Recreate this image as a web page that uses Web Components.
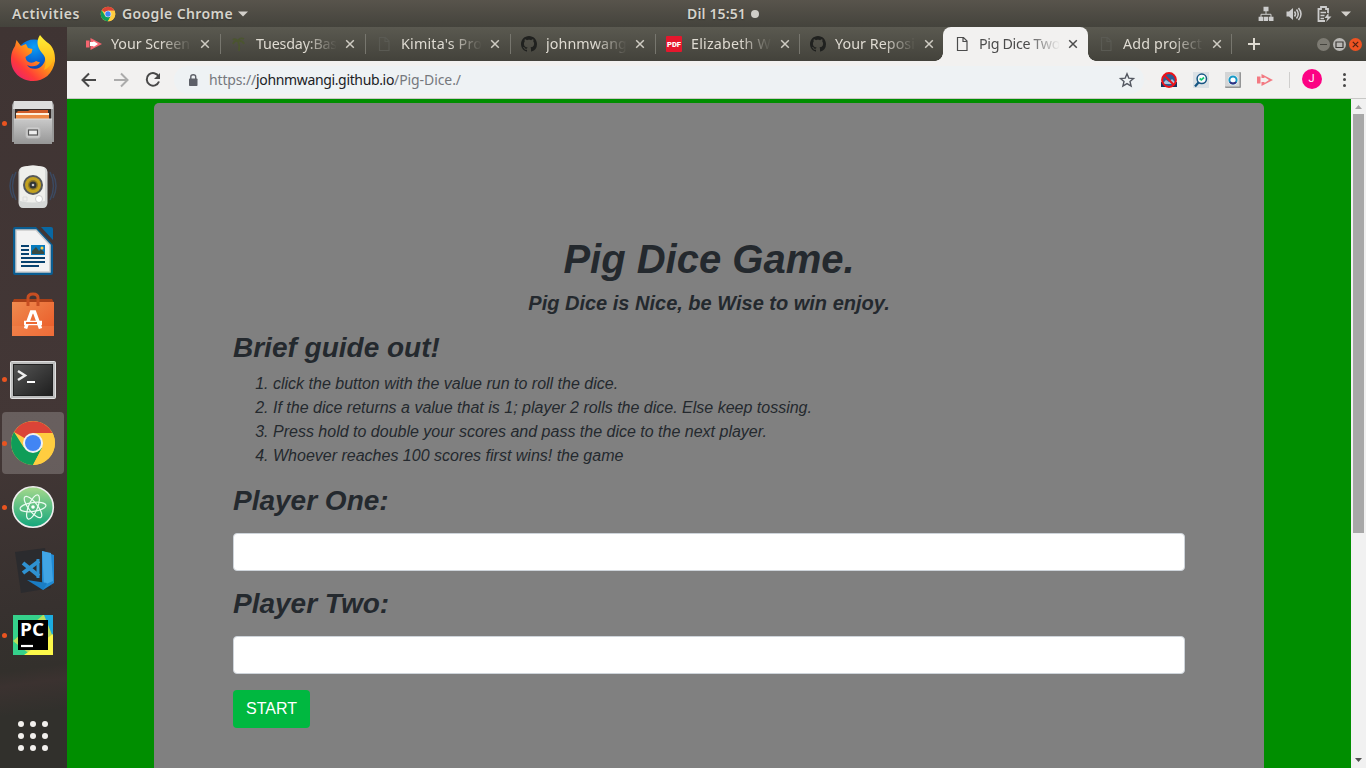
<!DOCTYPE html>
<html lang="en">
<head>
<meta charset="utf-8">
<title>Pig Dice</title>
<style>
html,body{margin:0;height:100%;overflow:hidden}
body{font-family:"Noto Sans","Open Sans",sans-serif}
</style>
</head>
<body>
<desk-top></desk-top>
<script>
const define = (name, html, setup) => customElements.define(name, class extends HTMLElement {
  connectedCallback() {
    if (this.shadowRoot) return;
    const root = this.attachShadow({mode: 'open'});
    const t = document.createElement('template');
    t.innerHTML = typeof html === 'function' ? html(this) : html;
    root.append(t.content.cloneNode(true));
    if (setup) setup(this, root);
  }
});

/* Text run tracked to a given width. */
define('fit-text', '<style>:host{display:inline-block;white-space:pre}span{display:inline-block}</style><span><slot></slot></span>', (el, root) => {
  const s = root.querySelector('span'), w = +el.getAttribute('w');
  el.style.width = w + 'px';
  const n = el.textContent.length;
  s.style.letterSpacing = (w - s.getBoundingClientRect().width) / n + 'px';
});

const icons = {
  chrome: `<svg viewBox="0 0 48 48"><circle cx="24" cy="24" r="22" fill="#fc4"/><path d="M24 24L5 13A22 22 0 0 1 43.500 14H24z" fill="#db4437"/><path d="M5 13A22 22 0 0 0 24 46L33 29 24 24 14.500 28z" fill="#0f9d58"/><path d="M24 14H43.500A22 22 0 0 1 24 46L33 29z" fill="#ffcd40"/><circle cx="24" cy="24" r="10" fill="#f1f1f1"/><circle cx="24" cy="24" r="8" fill="#4285f4"/></svg>`,
  firefox: `<svg viewBox="0 0 48 48"><defs><linearGradient id="a" x1="1" y1="0" x2="0" y2="1"><stop offset="0" stop-color="#ffe226"/><stop offset=".4" stop-color="#ff9a16"/><stop offset=".7" stop-color="#ff3c38"/><stop offset="1" stop-color="#e31587"/></linearGradient><radialGradient id="b" cx=".5" cy=".2" r=".8"><stop offset="0" stop-color="#0aa0f8"/><stop offset=".6" stop-color="#0558ca"/><stop offset="1" stop-color="#281a66"/></radialGradient><linearGradient id="c" x1="0" y1="0" x2="0" y2="1"><stop offset="0" stop-color="#fff036"/><stop offset="1" stop-color="#ffac11"/></linearGradient></defs><circle cx="25" cy="23" r="18.500" fill="url(#b)"/><path d="M7.500 5L12 11 17 9 19 13 23.500 14 22.500 18 16.500 22C17 28 23 29 27 26L31 27.500C28 32 22 32 18 30C22 36 32 35 35.500 27C38 20 35 14 32 8L37 7C44 10 46.500 18 46 26C44 39 35 46 24 46C11 46 2 36 2 25C2 18 4 14 6 11z" fill="url(#a)"/><path d="M31 0C27 6 28 12 33 18C38 23 37 30 35 35C43 32 47 22 44 15C42 9 35 6 31 0z" fill="url(#c)"/></svg>`,
  files: `<svg viewBox="0 0 48 48"><defs><linearGradient id="f" x1="0" y1="0" x2="0" y2="1"><stop offset="0" stop-color="#c9c9c9"/><stop offset="1" stop-color="#969696"/></linearGradient></defs><path d="M5 2H43L45 6V43H3V6z" fill="#999"/><path d="M5 2H43L44 10H4z" fill="#ddd"/><path d="M6 10H42V20H6z" fill="#332b29"/><path d="M9 12H19L21 11H39V20H7V14z" fill="#d05c28"/><path d="M7 14H40V20H7z" fill="#fff0dc"/><path d="M7 16H40V20H7z" fill="#ed8a45"/><path d="M5 20H43V45H5z" fill="url(#f)"/><path d="M5 20H43" stroke="#ddd"/><rect x="17" y="28" width="14" height="11" rx="2" fill="#ccc" stroke="#bbb"/><rect x="19.500" y="31" width="9" height="5" fill="#eee" stroke="#555" stroke-width="1.200"/></svg>`,
  music: `<svg viewBox="0 0 48 48"><path d="M7 9Q0 23 7 37M4 11Q-2 23 4 35M41 9Q48 23 41 37M44 11Q50 23 44 35" stroke="#39547a" stroke-width="1.500" fill="none" opacity=".65"/><path d="M13 4Q24 1 35 4Q39 5 38.500 12V40Q38 45 34 45H14Q10 45 9.500 40V12Q9 5 13 4z" fill="#d5d7d6"/><path d="M13 4Q24 1 35 4L36 7V38Q24 41 11 38V7z" fill="#efefec"/><circle cx="24" cy="22" r="10" fill="#55585a"/><circle cx="24" cy="22" r="8" fill="#c2a11f"/><circle cx="24" cy="22" r="5" fill="#8d7724"/><circle cx="24" cy="22" r="3.500" fill="#2f3435"/><circle cx="24" cy="22" r="1.300" fill="#ccc"/><circle cx="30" cy="36" r="3.500" fill="#fff" stroke="#ccc"/><path d="M14 34h4v4h-4z" fill="none" stroke="#ddd"/></svg>`,
  writer: `<svg viewBox="0 0 48 48"><path d="M6 0H27L44 18V46Q44 48 42 48H6Q4 48 4 46V2Q4 0 6 0z" fill="#0a5d91"/><path d="M7 3H27L41 18V45H7z" fill="#f3f3f3" stroke="#ccc" stroke-width="1.500"/><path d="M32 0H42Q44 0 44 2V13z" fill="#0868a3"/><path d="M12 19H20M12 23H20M12 27H20M12 31H36M12 35H36M12 39H30" stroke="#07426f" stroke-width="2"/><rect x="22" y="18" width="14" height="10" fill="#087bbd"/><path d="M23 27V24L27 20 30 24 32 22 35 25V27z" fill="#3b4b42"/><circle cx="33" cy="21" r="1.500" fill="#ffd04a"/></svg>`,
  store: `<svg viewBox="0 -1 48 48"><defs><linearGradient id="s" x1="0" y1="0" x2="1" y2="1"><stop offset="0" stop-color="#ef8b4f"/><stop offset="1" stop-color="#ea5826"/></linearGradient></defs><path d="M5 7H43L45 11H3z" fill="#a94018"/><path d="M3 10H45V44H3z" fill="url(#s)"/><path d="M3 34H45V44H3z" fill="#f58c55" opacity=".4"/><path d="M19 14V6Q19 2 24 2T29 6V14" fill="none" stroke="#c74e22" stroke-width="3"/><path d="M16.500 36.500L22.500 20H25.500L31.500 36.500" fill="none" stroke="#fff" stroke-width="3.500"/><path d="M15 31H33" stroke="#fff" stroke-width="4.500"/><path d="M17 31H28" stroke="#ed6a35" stroke-width="2"/></svg>`,
  terminal: `<svg viewBox="0 -1 48 48"><defs><linearGradient id="t" x1="0" y1="0" x2="1" y2="1"><stop offset="0" stop-color="#555"/><stop offset="1" stop-color="#1e1e1e"/></linearGradient></defs><rect x="1.500" y="5.500" width="45" height="37" rx="1" fill="#bdbdbd" stroke="#e2e2e2"/><rect x="4.500" y="8.500" width="39" height="31" fill="url(#t)" stroke="#222"/><path d="M9 15L16 19.500 9 24" fill="none" stroke="#eee" stroke-width="2.500"/><path d="M18 26H26" stroke="#fff" stroke-width="2"/></svg>`,
  atom: `<svg viewBox="0 0 48 48"><defs><linearGradient id="m" x1="0" y1="0" x2="0" y2="1"><stop offset="0" stop-color="#a6d98c"/><stop offset="1" stop-color="#12a67c"/></linearGradient></defs><circle cx="24" cy="24" r="20.300" fill="url(#m)" stroke="#eee" stroke-width="1.600"/><g fill="none" stroke="#eafaf0" stroke-width="1.200"><ellipse cx="24" cy="24" rx="13" ry="4.500" transform="rotate(-8 24 24)"/><ellipse cx="24" cy="24" rx="13" ry="4.500" transform="rotate(52 24 24)"/><ellipse cx="24" cy="24" rx="13" ry="4.500" transform="rotate(112 24 24)"/></g><circle cx="24" cy="24" r="1.800" fill="#fff"/></svg>`,
  vscode: `<svg viewBox="0 0 48 48"><path d="M6 5L36 1 42 41 12 46z" fill="#2b2b2e"/><path d="M33 4L45 8V36L34 43 33 33z" fill="#2089d2"/><path d="M33 4L42 6 44 34 35 38z" fill="#41a5e5"/><path d="M14 16L30 29M30 14L14 26" stroke="#2f91d1" stroke-width="4"/><path d="M29 12V31" stroke="#2f91d1" stroke-width="3"/><path d="M18 33L38 36 34 43z" fill="#1a7dc4"/></svg>`,
  pycharm: `<svg viewBox="0 0 48 48"><path d="M4 4H44V44H4z" fill="#35d18b"/><path d="M4 30L34 4H44V44H22z" fill="#b9df5c"/><path d="M35 4H44V26z" fill="#1cacdf"/><path d="M15 44L44 23V44z" fill="#fcf84a"/><path d="M9 9H39V39H9z"/><text x="11" y="25" font-family="Open Sans,sans-serif" font-weight="700" font-size="17" fill="#fff" textLength="24" lengthAdjust="spacingAndGlyphs">PC</text><path d="M12 35H24" stroke="#fff" stroke-width="2.200"/></svg>`,
  file: `<svg viewBox="0 0 16 16"><path d="M3.500 1.500H9.500L13 5V14.500H3.500z M9 1.500V5.500H13" fill="none" stroke="currentColor" stroke-width="1.200"/></svg>`,
  cast: `<svg viewBox="0 0 16 16"><path d="M0 4.500H3.500V11.500H0z" fill="#f4656f"/><path d="M4.500 2L16 8 4.500 14z" fill="#f4656f"/><path d="M4 6H7.500V5L12 8 7.500 11V10H4z" fill="var(--core,#fff)"/></svg>`,
  palm: `<svg viewBox="0 0 16 16"><path d="M2 8Q3 4 7 5Q3 2 2 4M7 5Q9 1 13 3M7 5Q12 4 13 8M7 5Q9 10 8 15" fill="none" stroke="#4b5530" stroke-width="1.800"/></svg>`,
  github: `<svg viewBox="0 0 16 16"><path fill="#20211f" d="M8 0C3.580 0 0 3.580 0 8c0 3.540 2.290 6.530 5.470 7.590.4.070.55-.17.55-.38 0-.19-.01-.82-.01-1.490-2.010.37-2.530-.49-2.690-.94-.09-.23-.48-.94-.82-1.130-.28-.15-.68-.52-.01-.53.63-.01 1.080.58 1.230.82.72 1.210 1.870.87 2.330.66.07-.52.28-.87.51-1.070-1.780-.2-3.640-.89-3.640-3.950 0-.87.31-1.590.82-2.150-.08-.2-.36-1.020.08-2.120 0 0 .67-.21 2.200.82.64-.18 1.320-.27 2-.27s1.360.09 2 .27c1.530-1.040 2.200-.82 2.200-.82.44 1.100.16 1.920.08 2.120.51.56.82 1.270.82 2.150 0 3.070-1.870 3.750-3.650 3.950.29.25.54.73.54 1.480 0 1.070-.01 1.930-.01 2.200 0 .21.15.46.55.38A8 8 0 0 0 16 8c0-4.420-3.580-8-8-8z"/></svg>`,
  pdf: `<svg viewBox="0 0 16 16"><rect width="16" height="16" rx="1" fill="#e5172d"/><text x="1" y="10.800" font-family="Roboto,sans-serif" font-size="7.500" font-weight="900" fill="#fff" textLength="14" lengthAdjust="spacingAndGlyphs">PDF</text></svg>`,
  close: `<svg viewBox="0 0 16 16"><path d="M4.200 4.200L11.800 11.800M11.800 4.200L4.200 11.800" stroke="currentColor" stroke-width="1.500"/></svg>`,
  back: `<svg viewBox="0 0 16 16"><path d="M15 8H2M8 1.500L1.500 8 8 14.500" fill="none" stroke="#484848" stroke-width="2"/></svg>`,
  fwd: `<svg viewBox="0 0 16 16"><path d="M1 8H14M8 1.500L14.500 8 8 14.500" fill="none" stroke="#ababab" stroke-width="2"/></svg>`,
  reload: `<svg viewBox="0 0 16 16"><path d="M13.700 4.500A6.300 6.300 0 1 0 14 9.500" fill="none" stroke="#484848" stroke-width="2"/><path d="M15 1V7H9z" fill="#484848"/></svg>`,
  lock: `<svg viewBox="0 0 16 16"><rect x="4" y="6.500" width="8.500" height="7.500" rx=".8" fill="#5d6068"/><path d="M5.800 7V4.800Q5.800 2.700 8.250 2.700T10.700 4.800V7" fill="none" stroke="#5d6068" stroke-width="1.400"/></svg>`,
  star: `<svg viewBox="0 0 16 16"><path d="M8 1.800L9.800 6.100 14.500 6.500 11 9.500 12.100 14 8 11.600 3.900 14 5 9.500 1.500 6.500 6.200 6.100z" fill="none" stroke="#535861" stroke-width="1.400"/></svg>`,
  block: `<svg viewBox="0 0 16 16"><path d="M0 10H16V15H0z" fill="#16315e"/><circle cx="8" cy="8" r="6.900" fill="#2d5c94"/><path d="M2 11L5 8 8 10 11 7 14 10V12H2z" fill="#a5c3de"/><circle cx="8" cy="8" r="6.900" fill="none" stroke="#ed1119" stroke-width="2"/><path d="M3.300 3.300L12.700 12.700" stroke="#ed1119" stroke-width="2"/></svg>`,
  search: `<svg viewBox="0 0 16 16"><rect width="16" height="16" fill="#dbe1e5"/><circle cx="8.800" cy="6.800" r="4.700" fill="#f8fbfc" stroke="#175683" stroke-width="1.500"/><path d="M5.500 10.500L2 14.500" stroke="#175683" stroke-width="2.300"/><path d="M6.700 6.500L8.300 7.800 11 5.500" fill="none" stroke="#12c773" stroke-width="1.700"/></svg>`,
  ring: `<svg viewBox="0 0 16 16"><rect width="16" height="16" rx="1" fill="#949596"/><path d="M0 0H14.500V14.500H0z" fill="#d4d5d6"/><circle cx="8" cy="8" r="5.200" fill="#f4f6f7"/><circle cx="8" cy="8" r="3.600" fill="#fff" stroke="#1899c6" stroke-width="2"/><path d="M5 10A3.600 3.600 0 0 0 11 10" fill="none" stroke="#342d81" stroke-width="2"/></svg>`,
  net: `<svg viewBox="0 0 16 16"><path d="M8 5V8M3 11V8.300H13V11" fill="none" stroke="#ccc" stroke-width="1"/><path d="M5.500.8H10.500V5.300H5.500zM.6 10.700H5.200V15H.6zM5.800 10.700H10.200V15H5.800zM10.900 10.700H15.500V15H10.900z" fill="#ccc"/></svg>`,
  sound: `<svg viewBox="0 0 16 16"><path d="M.5 5.500H3L7 2V14L3 10.500H.5z" fill="#ccc"/><path d="M8.500 5.500Q10.500 8 8.500 10.500M10.500 3.500Q14 8 10.500 12.500M12.500 2Q17.500 8 12.500 14" stroke="#ccc" stroke-width="1.500" fill="none"/></svg>`,
  power: `<svg viewBox="0 0 16 16"><path d="M12 7V3H10V1H5V3H2.500V15H9" fill="none" stroke="#ccc" stroke-width="1.800"/><path d="M4.500 6.500H10M4.500 9.500H8.500M4.500 12.500H8" stroke="#ccc" stroke-width="1.500"/><path d="M12.500 7L8.500 12H11.500L10 16 15.500 10.500H12.500z" fill="#ccc"/></svg>`,
  tri: `<svg viewBox="0 0 10 6"><path d="M0 .5H10L5 5.500z" fill="#d3d0cb"/></svg>`
};
define('ui-icon', el => `<style>:host{display:block;flex:none;width:${el.getAttribute('s') || 16}px;height:${el.getAttribute('h') || el.getAttribute('s') || 16}px}svg{display:block;width:100%;height:100%;overflow:visible}</style>${icons[el.getAttribute('n')]}`);

define('top-panel', `<style>
:host{display:grid;grid-template-columns:687px auto 1fr;align-items:center;height:27px;background:linear-gradient(#58544c,#44433c);color:#d6d3cb;font-size:14px;font-weight:600;line-height:26px;text-shadow:0 1px 1px #2228}
.l,.c,.r{display:flex;align-items:center}.l{padding-left:12px}.c{gap:5px}.r{justify-content:flex-end;padding-right:15px}
i{width:8px;height:8px;border-radius:50%;background:#d0cec8}
</style>
<div class="l"><fit-text w="68">Activities</fit-text><ui-icon n="chrome" style="margin-left:20px"></ui-icon><fit-text w="111" style="margin-left:6px">Google Chrome</fit-text><ui-icon n="tri" s="10" h="6" style="margin-left:5px"></ui-icon></div>
<div class="c"><fit-text w="59">Dil 15:51</fit-text><i></i></div>
<div class="r"><ui-icon n="net"></ui-icon><ui-icon n="sound" style="margin-left:12px"></ui-icon><ui-icon n="power" style="margin-left:14px"></ui-icon><ui-icon n="tri" s="10" h="6" style="margin-left:9px"></ui-icon></div>`);

define('dock-item', el => `<style>
:host{display:grid;grid-template-columns:9px 48px;height:64px;align-items:center;box-sizing:border-box;padding-left:0;position:relative}
:host([active])::before{content:"";position:absolute;left:2px;top:1px;width:62px;height:62px;border-radius:4px;background:#fff3}
b{width:5px;height:5px;border-radius:50%;margin-left:2px;position:relative;background:${el.hasAttribute('run') ? '#e95420' : 'transparent'}}
ui-icon{position:relative}
</style><b></b><ui-icon n="${el.getAttribute('n')}" s="48"></ui-icon>`);

define('app-dock', `<style>
:host{display:flex;flex-direction:column;background:linear-gradient(172deg,#3f3433 0,#433736 55%,#37312f 78%,#33302c 86%,#3b3230 88%,#31302c 92%)}
.g{display:grid;grid-template-columns:repeat(3,6px);gap:6px;margin:auto 0 17px 18px}
.g i{width:6px;height:6px;border-radius:50%;background:#f2f0ed}
</style>
<dock-item n="firefox"></dock-item><dock-item n="files" run></dock-item><dock-item n="music"></dock-item><dock-item n="writer"></dock-item><dock-item n="store"></dock-item><dock-item n="terminal" run></dock-item><dock-item n="chrome" run active></dock-item><dock-item n="atom" run></dock-item><dock-item n="vscode"></dock-item><dock-item n="pycharm" run></dock-item>
<div class="g"><i></i><i></i><i></i><i></i><i></i><i></i><i></i><i></i><i></i></div>`);

define('browser-tab', el => `<style>
:host{display:flex;position:relative;box-sizing:border-box;flex:none;width:145px;height:34px;align-items:center;padding-left:11px;color:#dfdbd2;font-size:14.300px;line-height:34px}
:host([narrow]){width:144px}
ui-icon.f{color:#5a5a53}
.t{width:81px;margin-left:9px;overflow:hidden;-webkit-mask:linear-gradient(90deg,#000 60%,#0000 100%)}
.x{margin-left:5px;color:#cfccc3}
:host::after{content:"";position:absolute;right:-1px;top:7px;width:1px;height:20px;background:#77766e}
:host([nosep])::after{display:none}
:host([active]){width:145px;margin-right:-1px;background:#f2f1f0;border-radius:8px 8px 0 0;color:#4c4c4c}
:host([active]) ui-icon{color:#4c4c4c}
:host([active])::before,:host([active])::after{content:"";display:block;position:absolute;bottom:0;top:auto;width:8px;height:8px}
:host([active])::before{left:-8px;background:radial-gradient(circle at 0 0,#0000 7.500px,#f2f1f0 8px)}
:host([active])::after{right:-8px;background:radial-gradient(circle at 100% 0,#0000 7.500px,#f2f1f0 8px)}
</style><ui-icon class="f" n="${el.getAttribute('n')}"></ui-icon><div class="t"><fit-text w="${el.getAttribute('w')}">${el.textContent}</fit-text></div><ui-icon class="x" n="close"></ui-icon>`);

define('tab-strip', `<style>
:host{display:flex;height:34px;padding-left:8px;background:linear-gradient(#5a5950,#43423b);align-items:center}
svg.p{width:12px;height:12px;margin-left:17px}
.w{display:flex;gap:3px;margin-left:auto;padding-right:4px}
.w svg{width:13px;height:13px;display:block}
</style>
<browser-tab n="cast" w="79">Your Screen</browser-tab><browser-tab n="palm" w="81">Tuesday:Bas</browser-tab><browser-tab n="file" w="81">Kimita's Pro</browser-tab><browser-tab n="github" w="81">johnmwang</browser-tab><browser-tab n="pdf" w="80" narrow>Elizabeth W</browser-tab><browser-tab n="github" w="80" narrow nosep>Your Reposi</browser-tab><browser-tab n="file" w="81" active>Pig Dice Two</browser-tab><browser-tab n="file" w="79" narrow>Add project</browser-tab>
<svg class="p" viewBox="0 0 12 12"><path d="M6 0V12M0 6H12" stroke="#dfdbd2" stroke-width="2"/></svg>
<div class="w"><svg viewBox="0 0 13 13"><circle cx="6.500" cy="6.500" r="6.500" fill="#7d7b73"/><path d="M3 6.500H10" stroke="#45443e"/></svg><svg viewBox="0 0 13 13"><circle cx="6.500" cy="6.500" r="6.500" fill="#b8b7b4"/><path d="M3 4H10V9.500H3z" fill="none" stroke="#3c3b37" stroke-width="1.200"/></svg><svg viewBox="0 0 13 13"><circle cx="6.500" cy="6.500" r="6.500" fill="#ee5322"/><path d="M3.800 3.800L9.200 9.200M9.200 3.800L3.800 9.200" stroke="#4e2213" stroke-width="1.200"/></svg></div>`);

define('nav-bar', `<style>
:host{display:flex;box-sizing:border-box;height:38px;padding-left:14px;background:#f2f1f0;border-bottom:1px solid #c8c8c6;align-items:center}
.o{display:flex;box-sizing:border-box;align-items:center;width:970px;height:28px;border-radius:14px;background:#eef2f4;margin-left:13px;padding:0 9px 0 11px;font-size:14px;color:#75787d}
.o .h{color:#202124}.o ui-icon:last-child{margin-left:auto}
.s{width:1px;height:16px;background:#cfcecd;margin-left:15.500px}
.a{width:20px;height:20px;border-radius:50%;background:#fc0283;color:#fff;font:11px/20px Roboto,sans-serif;text-align:center;margin:-1px 0 0 12px}
.m{display:grid;gap:2.500px;margin-left:21px}.m i{width:3px;height:3px;border-radius:50%;background:#484848}
</style>
<ui-icon n="back"></ui-icon><ui-icon n="fwd" style="margin-left:16px"></ui-icon><ui-icon n="reload" style="margin-left:16px"></ui-icon>
<div class="o"><ui-icon n="lock"></ui-icon><fit-text w="47" style="margin-left:8px">https://</fit-text><fit-text w="138" class="h">johnmwangi.github.io</fit-text><fit-text w="67">/Pig-Dice./</fit-text><ui-icon n="star"></ui-icon></div>
<ui-icon n="block" style="margin-left:17px"></ui-icon><ui-icon n="search" style="margin-left:16px"></ui-icon><ui-icon n="ring" style="margin-left:16px"></ui-icon><ui-icon n="cast" style="margin-left:16px;opacity:.85;--core:#f2f1f0"></ui-icon><div class="s"></div><div class="a">J</div><div class="m"><i></i><i></i><i></i></div>`);

define('scroll-bar', `<style>
:host{display:flex;flex-direction:column;align-items:center;width:15px;background:#f1f1f1}
svg{width:7px;height:4px;margin:6px 0 5px}.t{width:11px;height:419px;background:#a8a8a8}svg:last-child{margin:auto 0 6px}
</style><svg viewBox="0 0 7 4"><path d="M0 4L3.500 0 7 4z" fill="#a3a3a3"/></svg><div class="t"></div><svg viewBox="0 0 7 4"><path d="M0 0L3.500 4 7 0z" fill="#505050"/></svg>`);

define('player-field', `<style>
:host{display:block;height:103px}
h3{margin:0 0 16px;font-size:28px;line-height:33px}
input{display:block;box-sizing:border-box;width:100%;height:38px;border:1px solid #ced4da;border-radius:4px;background:#fff;padding:6px 12px}
</style><h3><slot></slot></h3><input type="text">`);

define('pig-dice', `<style>
:host{display:block;background:#008e00;padding:4px 87px 0;overflow:hidden}
main{box-sizing:border-box;height:800px;padding:132px 79px 0;border-radius:5px;background:#808080;color:#24292e;font:italic 16px/24px "Liberation Sans",Arial,sans-serif}
h1,h5,h3{margin:0;font-weight:700}h1{font-size:40px;line-height:48px;text-align:center}
h5{font-size:20px;line-height:24px;text-align:center;margin:8px 0 16px}h3{font-size:28px;line-height:33px}
ol{margin:8px 0 16px;padding-left:40px}
button{box-sizing:border-box;height:38px;width:77px;padding:0;border:0;border-radius:4px;background:#00b840;color:#fff;font:16px/24px "Liberation Sans",Arial,sans-serif;display:block}
</style>
<main><h1>Pig Dice Game.</h1><h5>Pig Dice is Nice, be Wise to win enjoy.</h5>
<h3>Brief guide out!</h3>
<ol><li>click the button with the value run to roll the dice.</li><li>If the dice returns a value that is 1; player 2 rolls the dice. Else keep tossing.</li><li>Press hold to double your scores and pass the dice to the next player.</li><li>Whoever reaches 100 scores first wins! the game</li></ol>
<player-field>Player One:</player-field><player-field>Player Two:</player-field>
<button>START</button></main>`);

define('desk-top', `<style>
:host{display:grid;grid-template:27px 34px 38px 669px/67px 1284px 15px;width:1366px;height:768px;overflow:hidden}
top-panel{grid-area:1/1/2/4}app-dock{grid-area:2/1/5/2}tab-strip{grid-area:2/2/3/4}nav-bar{grid-area:3/2/4/4}pig-dice{grid-area:4/2}scroll-bar{grid-area:4/3}
</style><top-panel></top-panel><app-dock></app-dock><tab-strip></tab-strip><nav-bar></nav-bar><pig-dice></pig-dice><scroll-bar></scroll-bar>`);
</script>
</body>
</html>
